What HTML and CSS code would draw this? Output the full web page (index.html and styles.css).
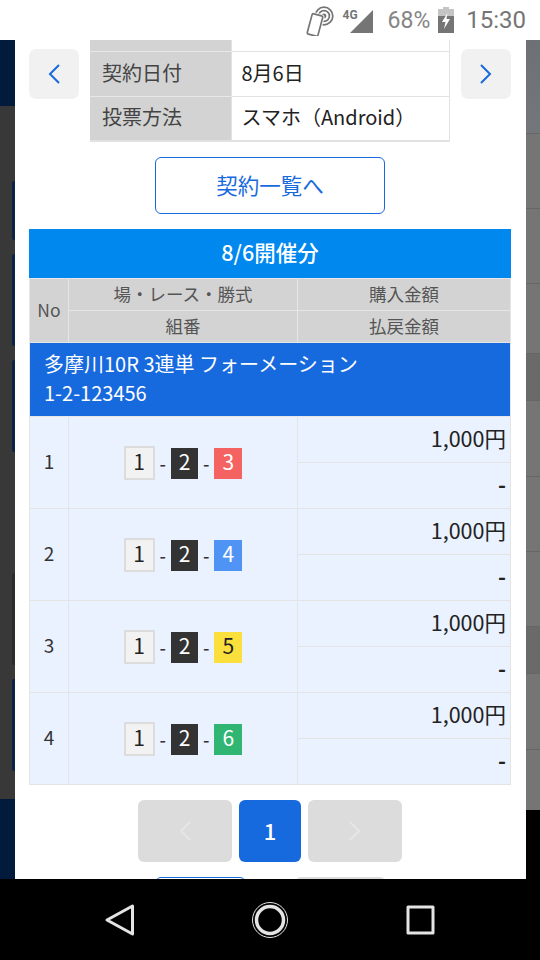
FILE: index.html
```html
<!DOCTYPE html>
<html lang="ja">
<head>
  <meta charset="UTF-8" />
  <title>契約詳細</title>
  <link rel="stylesheet" href="styles.css">
</head>
<body>
  <div class="status-bar">
    <svg class="ic-nfc" width="30" height="30" viewBox="0 0 30 30" fill="none" stroke="#757575" stroke-width="1.7">
      <circle cx="20" cy="10" r="2.4" fill="#757575" stroke="none"/>
      <circle cx="20" cy="10" r="5.4"/>
      <circle cx="20" cy="10" r="8.8"/>
      <rect x="5.5" y="8.5" width="11" height="21" rx="1.5" fill="#fff" stroke="#fff" stroke-width="3.5" transform="rotate(15 11 19)"/>
      <rect x="5.5" y="8.5" width="11" height="21" rx="1.5" fill="#fff" transform="rotate(15 11 19)"/>
    </svg>
    <span class="net">4G</span>
    <svg class="ic-signal" width="24" height="24" viewBox="0 0 24 24"><path d="M1 24 L24 1 V24 Z" fill="#757575"/></svg>
    <span class="pct">68%</span>
    <svg class="ic-batt" width="16" height="26" viewBox="0 0 16 26">
      <path d="M5 0 H11 V2 H16 V26 H0 V2 H5 Z" fill="#c4c4c4"/>
      <rect x="0" y="9" width="16" height="17" fill="#757575"/>
      <path d="M9.5 6 L4 15 H7.5 L6 22 L12 12 H8.5 Z" fill="#fff"/>
    </svg>
    <span class="clock">15:30</span>
  </div>

  <div class="screen">
    <div class="side side-left">
      <div class="navy top"></div>
      <div class="dark">
        <div class="ghost g1"></div>
        <div class="ghost g2"></div>
        <div class="ghost g3"></div>
        <div class="ghost g4"></div>
        <div class="ghost g5"></div>
      </div>
      <div class="navy bottom"></div>
    </div>

    <div class="modal">
      <div class="detail">
        <button class="arrow">
          <svg width="14" height="22" viewBox="0 0 14 22" fill="none" stroke="#1769de" stroke-width="2"><path d="M12 2 L3 11 L12 20"/></svg>
        </button>
        <table class="info">
          <tr class="cut"><th></th><td></td></tr>
          <tr><th>契約日付</th><td>8月6日</td></tr>
          <tr><th>投票方法</th><td>スマホ（Android）</td></tr>
        </table>
        <button class="arrow">
          <svg width="14" height="22" viewBox="0 0 14 22" fill="none" stroke="#1769de" stroke-width="2"><path d="M2 2 L11 11 L2 20"/></svg>
        </button>
      </div>

      <a class="list-btn">契約一覧へ</a>

      <div class="day-title">8/6開催分</div>
      <table class="bets">
        <colgroup><col class="c-no"><col class="c-kumi"><col class="c-amt"></colgroup>
        <tr class="head">
          <th rowspan="2">No</th>
          <th>場・レース・勝式</th>
          <th>購入金額</th>
        </tr>
        <tr class="head">
          <th>組番</th>
          <th>払戻金額</th>
        </tr>
        <tr class="race">
          <td colspan="3">多摩川10R 3連単 フォーメーション<br>1-2-123456</td>
        </tr>

        <tr class="bet">
          <td class="no" rowspan="2">1</td>
          <td class="kumi" rowspan="2"><span class="combo"><i class="n n1">1</i>-<i class="n n2">2</i>-<i class="n n3">3</i></span></td>
          <td class="amt">1,000円</td>
        </tr>
        <tr class="bet"><td class="amt dash">-</td></tr>

        <tr class="bet">
          <td class="no" rowspan="2">2</td>
          <td class="kumi" rowspan="2"><span class="combo"><i class="n n1">1</i>-<i class="n n2">2</i>-<i class="n n4">4</i></span></td>
          <td class="amt">1,000円</td>
        </tr>
        <tr class="bet"><td class="amt dash">-</td></tr>

        <tr class="bet">
          <td class="no" rowspan="2">3</td>
          <td class="kumi" rowspan="2"><span class="combo"><i class="n n1">1</i>-<i class="n n2">2</i>-<i class="n n5">5</i></span></td>
          <td class="amt">1,000円</td>
        </tr>
        <tr class="bet"><td class="amt dash">-</td></tr>

        <tr class="bet">
          <td class="no" rowspan="2">4</td>
          <td class="kumi" rowspan="2"><span class="combo"><i class="n n1">1</i>-<i class="n n2">2</i>-<i class="n n6">6</i></span></td>
          <td class="amt">1,000円</td>
        </tr>
        <tr class="bet"><td class="amt dash">-</td></tr>
      </table>

      <div class="pager">
        <span class="pg off">
          <svg width="14" height="22" viewBox="0 0 14 22" fill="none" stroke="#e6e6e6" stroke-width="2"><path d="M12 2 L3 11 L12 20"/></svg>
        </span>
        <span class="pg now">1</span>
        <span class="pg off">
          <svg width="14" height="22" viewBox="0 0 14 22" fill="none" stroke="#e6e6e6" stroke-width="2"><path d="M2 2 L11 11 L2 20"/></svg>
        </span>
      </div>

      <div class="foot">
        <span class="foot-a"></span>
        <span class="foot-b"></span>
      </div>
    </div>

    <div class="side side-right">
      <div class="r r0"></div>
      <div class="r r1"></div>
      <div class="r r1"></div>
      <div class="r r2"></div>
      <div class="r r3"></div>
      <div class="r r1"></div>
      <div class="r r1"></div>
      <div class="r r1"></div>
      <div class="r r3"></div>
      <div class="r r4"></div>
      <div class="r r1 last"></div>
    </div>
  </div>

  <div class="nav-bar">
    <svg width="34" height="34" viewBox="0 0 34 34" fill="none" stroke="#e4e4e4" stroke-width="3" stroke-linejoin="round"><path d="M29.5 3 V31 L4 17 Z"/></svg>
    <svg class="ic-home" width="38" height="38" viewBox="0 0 38 38" fill="none"><circle cx="19" cy="19" r="17.5" stroke="#e4e4e4" stroke-width="1"/><circle cx="19" cy="19" r="13.5" stroke="#e4e4e4" stroke-width="3.5"/></svg>
    <svg width="30" height="30" viewBox="0 0 30 30" fill="none" stroke="#e4e4e4" stroke-width="3" stroke-linejoin="round"><rect x="2" y="2" width="25" height="26"/></svg>
  </div>
</body>
</html>
```

FILE: styles.css
```css
* {
  box-sizing: border-box;
}
html, body {
  margin: 0;
  padding: 0;
}
body {
  width: 540px;
  height: 960px;
  display: flex;
  flex-direction: column;
  overflow: hidden;
  font-family: "Noto Sans CJK JP", "Noto Sans", sans-serif;
  color: #333;
  background: #000;
}

/* status bar */
.status-bar {
  height: 40px;
  flex: none;
  background: #fff;
  color: #757575;
  display: flex;
  align-items: center;
  justify-content: flex-end;
  padding-right: 14px;
  font-family: Roboto, sans-serif;
}
.ic-nfc {
  margin-right: 9px;
  margin-top: 1px;
}
.net {
  font-size: 12px;
  font-weight: 700;
  width: 0;
  margin-top: -10px;
  white-space: nowrap;
}
.ic-signal {
  margin: 2px 15px 0 6px;
}
.pct {
  font-size: 23px;
  margin-right: 8px;
  color: #858585;
}
.ic-batt {
  margin-right: 12px;
}
.clock {
  font-size: 24px;
}

/* page behind the dialog */
.screen {
  flex: 1;
  display: flex;
  min-height: 0;
}
.side {
  flex: none;
  display: flex;
  flex-direction: column;
  overflow: hidden;
}
.side-left {
  width: 15px;
}
.navy.top {
  height: 66px;
  background: #021a3b;
}
.navy.bottom {
  height: 80px;
  background: #021a3b;
}
.dark {
  flex: 1;
  background: #383838;
  padding-top: 75px;
}
.ghost {
  margin-left: 12px;
  height: 92px;
  margin-bottom: 14px;
  border: 2px solid #0c2345;
  border-radius: 4px;
}
.ghost.g1 {
  height: 59px;
}
.ghost.g3 {
  margin-bottom: 121px;
}
.ghost.g4 {
  border-color: #2c2c2c;
}
.side-right {
  width: 14px;
}
.r {
  border-bottom: 1px solid #666;
  background: #757575;
  height: 75px;
}
.r0 {
  height: 94px;
  background: linear-gradient(#6d7175, #73767a);
}
.r2 {
  height: 70px;
}
.r3 {
  height: 47px;
  background: #6a6a6a;
}
.r3 + .r1 {
  height: 76px;
}
.r4 {
  height: 76px;
}
.last {
  height: 60px;
  border-bottom: 0;
}

/* dialog */
.modal {
  flex: 1;
  min-width: 0;
  background: #fff;
  padding: 0 15px 0 14px;
  overflow: hidden;
}
.detail {
  display: flex;
  justify-content: space-between;
  align-items: flex-start;
}
.arrow {
  width: 50px;
  height: 50px;
  margin-top: 9px;
  border: 0;
  padding: 0;
  border-radius: 7px;
  background: #f1f1f1;
  display: flex;
  align-items: center;
  justify-content: center;
}
.info {
  width: 360px;
  border-collapse: collapse;
  font-size: 20px;
  border-bottom: 2px solid #e2e2e2;
}
.info tr {
  height: 45px;
}
.info tr.cut {
  height: 11px;
}
.info th {
  width: 141px;
  background: #d3d3d3;
  font-weight: 400;
  text-align: left;
  padding: 0 0 3px 12px;
  border-bottom: 1px solid #e8e8e8;
  color: #444;
}
.info td {
  background: #fff;
  padding: 0 0 3px 10px;
  color: #222;
  border: 1px solid #e2e2e2;
}
.info tr.cut th, .info tr.cut td {
  padding: 0;
}
.info tr.cut td {
  border-top: 0;
}
.list-btn {
  display: flex;
  width: 230px;
  height: 57px;
  margin: 15px auto 15px;
  padding-bottom: 3px;
  align-items: center;
  justify-content: center;
  border: 1.5px solid #1769de;
  border-radius: 6px;
  color: #1769de;
  font-size: 21.5px;
}
.day-title {
  height: 49px;
  background: #0088ee;
  color: #fff;
  font-size: 21.5px;
  font-weight: 500;
  text-align: center;
  line-height: 46px;
}

/* bets table */
.bets {
  width: 482px;
  table-layout: fixed;
  border-collapse: collapse;
  border: 1px solid #e4e4e4;
}
.c-no {
  width: 39px;
}
.c-kumi {
  width: 229px;
}
.head th {
  height: 32px;
  padding: 0 0 2px;
  background: #d3d3d3;
  border: 1px solid #e6e6e6;
  font-size: 17.5px;
  font-weight: 400;
  color: #555;
}
.race td {
  height: 74px;
  padding: 0 0 4px 14px;
  background: #1769de;
  color: #fff;
  font-size: 20px;
  line-height: 29px;
  border: 1px solid #e6e6e6;
}
.bet td {
  height: 46px;
  padding: 0;
  background: #e9f2fe;
  border: 1px solid #e4e4e4;
  color: #333;
}
.bet .no {
  text-align: center;
  font-size: 19px;
  padding-bottom: 4px;
}
.bet .amt {
  text-align: right;
  padding: 0 4px 4px 0;
  font-size: 21.5px;
  color: #222;
}
.bet .dash {
  font-weight: 700;
}
.bet .kumi {
  text-align: center;
  font-size: 18px;
  font-weight: 500;
  padding-top: 1px;
}
.combo {
  display: inline-flex;
  align-items: center;
  gap: 5px;
  line-height: 1;
}
.n {
  font-style: normal;
  font-size: 21px;
  font-weight: 400;
  width: 28px;
  height: 31px;
  padding-bottom: 3px;
  display: flex;
  align-items: center;
  justify-content: center;
}
.n1 {
  width: 31px;
  height: 34px;
  background: #f2f2f2;
  border: 2px solid #dcdcdc;
  color: #222;
}
.n2 {
  width: 27px;
  background: #333;
  color: #fff;
}
.n3 {
  background: #f46262;
  color: #fff;
}
.n4 {
  background: #4f94f5;
  color: #fff;
}
.n5 {
  background: #fbdf3c;
  color: #222;
}
.n6 {
  background: #30b672;
  color: #fff;
}

/* pager */
.pager {
  display: flex;
  justify-content: center;
  gap: 7px;
  margin-top: 15px;
}
.pg {
  height: 62px;
  display: flex;
  align-items: center;
  justify-content: center;
  border-radius: 6px;
}
.pg.off {
  width: 94px;
  background: #dcdcdc;
}
.pg.now {
  width: 62px;
  background: #1769de;
  color: #fff;
  font-size: 22px;
  font-weight: 500;
  padding-bottom: 3px;
}
.foot {
  display: flex;
  justify-content: center;
  gap: 49px;
  margin-top: 15px;
}
.foot-a, .foot-b {
  width: 91px;
  height: 20px;
  border-radius: 6px;
}
.foot-a {
  border: 1.5px solid #1769de;
}
.foot-b {
  background: #dcdcdc;
}

/* android nav */
.nav-bar {
  height: 81px;
  flex: none;
  background: #000;
  display: flex;
  align-items: center;
  padding-left: 103px;
}
.ic-home {
  margin: 0 117px 0 114px;
}
```
